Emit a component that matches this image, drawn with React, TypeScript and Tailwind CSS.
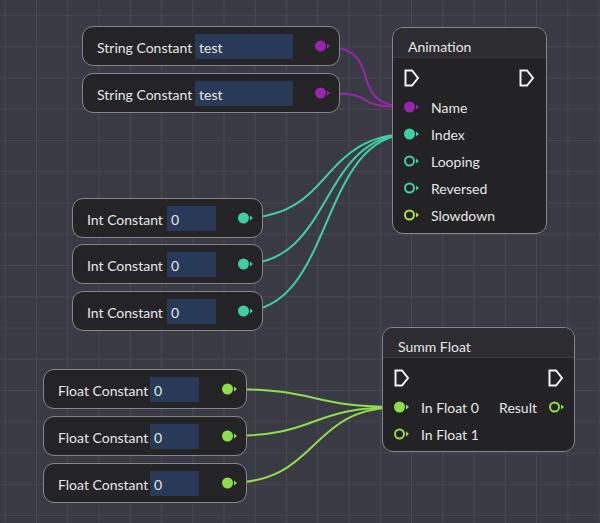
const PURPLE = '#9a25ad';
const TEAL = '#3fcf9f';
const GREEN = '#8fdd4b';
const LIME = '#b4e23c';

type Pin = { color: string; filled?: boolean };

function Port({ color, filled }: Pin) {
  return (
    <svg width="16" height="12" viewBox="0 0 16 12" className="shrink-0">
      {filled ? (
        <circle cx="5.5" cy="6" r="5.5" fill={color} />
      ) : (
        <circle cx="5.5" cy="6" r="4.5" fill="none" stroke={color} strokeWidth="2" />
      )}
      <polygon points="12,3.5 15,6 12,8.5" fill={color} />
    </svg>
  );
}

function Exec() {
  return (
    <svg width="16" height="18" viewBox="0 0 16 18" className="shrink-0">
      <path d="M1.5 1.5 H8 L14 9 L8 16.5 H1.5 Z" fill="none" stroke="#f2f2f2" strokeWidth="2" />
    </svg>
  );
}

type ConstProps = {
  label: string;
  value: string;
  color: string;
  left: number;
  top: number;
  width: number;
  labelW: number;
  fieldW: number;
};

function ConstNode({ label, value, color, left, top, width, labelW, fieldW }: ConstProps) {
  return (
    <div
      className="absolute h-[40px] rounded-[11px] border-[1.5px] border-[#85858a] bg-[#242427] flex items-center pl-[14px] pr-[8px] text-[14px] text-[#e6e6e6]"
      style={{ left, top, width }}
    >
      <span className="shrink-0 whitespace-nowrap pt-[2px]" style={{ width: labelW }}>
        {label}
      </span>
      <div className="h-[25px] bg-[#283a58] pl-[4px] pt-[2px] flex items-center" style={{ width: fieldW }}>
        {value}
      </div>
      <div className="ml-auto">
        <Port color={color} filled />
      </div>
    </div>
  );
}

function Row({ pin, label }: { pin: Pin; label: string }) {
  return (
    <div className="h-[27px] flex items-center gap-[11px]">
      <Port {...pin} />
      <span className="pt-[1px]">{label}</span>
    </div>
  );
}

function wire(x1: number, y1: number, x2: number, y2: number, k = 0.55) {
  const d = (x2 - x1) * k;
  return `M${x1} ${y1} C${x1 + d} ${y1} ${x2 - d} ${y2} ${x2} ${y2}`;
}

export default function App() {
  return (
    <div
      className="relative w-[600px] h-[523px] overflow-hidden bg-[#3a3a44] bg-[linear-gradient(to_right,#474752_1px,transparent_1px),linear-gradient(to_bottom,#474752_1px,transparent_1px)] bg-[size:31.25px_31.25px] bg-[position:4.75px_15px]"
      style={{ fontFamily: 'Lato, "Noto Sans", sans-serif' }}
    >
      {/* wires sit under the nodes */}
      <svg className="absolute inset-0" width="600" height="523" fill="none" strokeWidth="2">
        <path d={wire(320, 46, 411, 107, 0.8)} stroke={PURPLE} />
        <path d={wire(320, 93, 411, 107, 0.8)} stroke={PURPLE} />
        <path d={wire(242, 218, 411, 134)} stroke={TEAL} />
        <path d={wire(242, 264, 411, 134)} stroke={TEAL} />
        <path d={wire(242, 311, 411, 134)} stroke={TEAL} />
        <path d={wire(227, 389, 401, 407)} stroke={GREEN} />
        <path d={wire(227, 436, 401, 407)} stroke={GREEN} />
        <path d={wire(227, 483, 401, 407)} stroke={GREEN} />
      </svg>

      <ConstNode label="String Constant" value="test" color={PURPLE} left={82} top={26} width={258} labelW={98} fieldW={98} />
      <ConstNode label="String Constant" value="test" color={PURPLE} left={82} top={73} width={258} labelW={98} fieldW={98} />

      <ConstNode label="Int Constant" value="0" color={TEAL} left={72} top={198} width={191} labelW={80} fieldW={49} />
      <ConstNode label="Int Constant" value="0" color={TEAL} left={72} top={244} width={191} labelW={80} fieldW={49} />
      <ConstNode label="Int Constant" value="0" color={TEAL} left={72} top={291} width={191} labelW={80} fieldW={49} />

      <ConstNode label="Float Constant" value="0" color={GREEN} left={43} top={369} width={204} labelW={92} fieldW={49} />
      <ConstNode label="Float Constant" value="0" color={GREEN} left={43} top={416} width={204} labelW={92} fieldW={49} />
      <ConstNode label="Float Constant" value="0" color={GREEN} left={43} top={463} width={204} labelW={92} fieldW={49} />

      {/* Animation node */}
      <div className="absolute left-[392px] top-[27px] w-[155px] h-[207px] rounded-[11px] border-[1.5px] border-[#85858a] bg-[#232326] overflow-hidden text-[14px] text-[#e6e6e6]">
        <div className="h-[30px] bg-[#2d2d31] border-b border-[#3c3c40] flex items-center pl-[15px] pt-[7px]">Animation</div>
        <div className="px-[11px] pt-[11px]">
          <div className="flex justify-between">
            <Exec />
            <Exec />
          </div>
          <div className="mt-[6px]">
            <Row pin={{ color: PURPLE, filled: true }} label="Name" />
            <Row pin={{ color: TEAL, filled: true }} label="Index" />
            <Row pin={{ color: TEAL }} label="Looping" />
            <Row pin={{ color: TEAL }} label="Reversed" />
            <Row pin={{ color: LIME }} label="Slowdown" />
          </div>
        </div>
      </div>

      {/* Summ Float node */}
      <div className="absolute left-[382px] top-[327px] w-[193px] h-[125px] rounded-[11px] border-[1.5px] border-[#85858a] bg-[#232326] overflow-hidden text-[14px] text-[#e6e6e6]">
        <div className="h-[30px] bg-[#2d2d31] border-b border-[#3c3c40] flex items-center pl-[15px] pt-[7px]">Summ Float</div>
        <div className="pl-[11px] pr-[9px] pt-[11px]">
          <div className="flex justify-between">
            <Exec />
            <div className="pr-[1px]">
              <Exec />
            </div>
          </div>
          <div className="mt-[6px]">
            <div className="flex items-center justify-between">
              <Row pin={{ color: GREEN, filled: true }} label="In Float 0" />
              <div className="flex items-center gap-[12px]">
                <span className="pt-[1px]">Result</span>
                <Port color={GREEN} />
              </div>
            </div>
            <Row pin={{ color: GREEN }} label="In Float 1" />
          </div>
        </div>
      </div>
    </div>
  );
}
